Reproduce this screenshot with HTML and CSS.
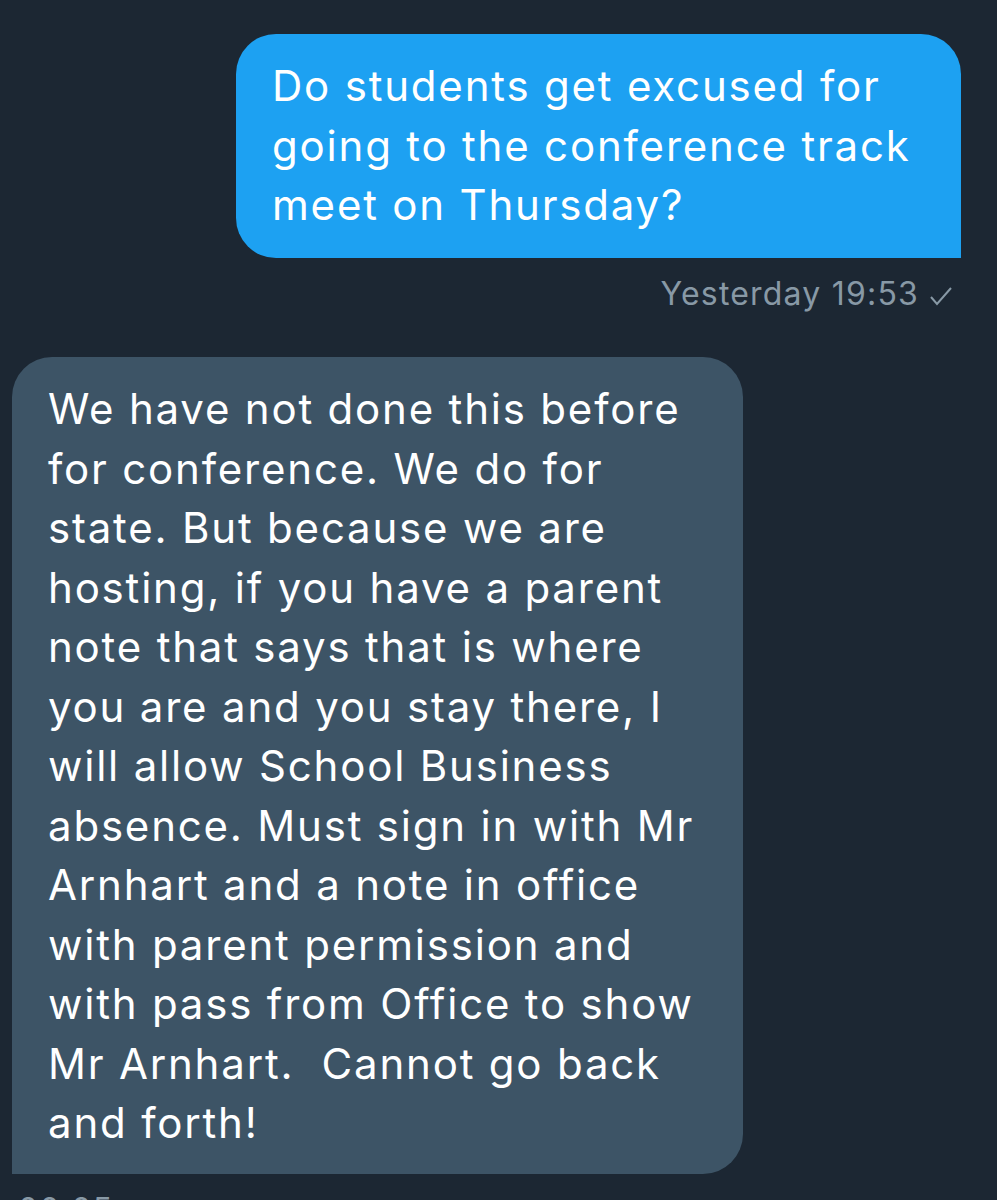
FILE: index.html
```html
<!DOCTYPE html>
<html lang="en">
  <head>
    <meta charset="UTF-8">
    <meta name="viewport" content="width=device-width, initial-scale=1.0">
    <title>Messages</title>
    <link rel="stylesheet" href="styles.css">
  </head>
  <body>
    <div id="thread">
      <div class="message outgoing">
        <div class="bubble">Do students get excused for
going to the conference track
meet on Thursday?</div>
        <div class="meta">Yesterday 19:53
          <svg class="check" width="24" height="20" viewBox="0 0 24 20"><path d="M2 11 L8 18 L22 2" fill="none" stroke="#8899a6" stroke-width="2"/></svg>
        </div>
      </div>

      <div class="message incoming">
        <div class="bubble">We have not done this before
for conference. We do for
state. But because we are
hosting, if you have a parent
note that says that is where
you are and you stay there, I
will allow School Business
absence. Must sign in with Mr
Arnhart and a note in office
with parent permission and
with pass from Office to show
Mr Arnhart.&nbsp; Cannot go back
and forth!</div>
        <div class="meta">00:05</div>
      </div>
    </div>
  </body>
</html>
```

FILE: styles.css
```css
body {
  font-family: Inter, "Noto Sans", sans-serif;
  background-color: #1c2733;
  margin: 0;
  height: 1200px;
  overflow: hidden;
}

#thread {
  display: flex;
  flex-direction: column;
  padding-top: 34px;
}

.message {
  display: flex;
  flex-direction: column;
}

.bubble {
  white-space: pre-line;
  font-size: 42px;
  line-height: 59.5px;
  letter-spacing: 1.8px;
  color: #fff;
  box-sizing: border-box;
}

.outgoing {
  align-items: flex-end;
  padding-right: 36px;
}

.outgoing .bubble {
  width: 725px;
  height: 224px;
  padding: 22px 36px;
  background-color: #1da1f2;
  border-radius: 40px 40px 0 40px;
}

.incoming {
  align-items: flex-start;
  padding-left: 12px;
  margin-top: 44px;
}

.incoming .bubble {
  width: 731px;
  height: 817px;
  padding: 22px 36px;
  background-color: #3d5466;
  border-radius: 40px 40px 40px 0;
}

.meta {
  display: flex;
  align-items: center;
  gap: 10px;
  font-size: 32px;
  letter-spacing: 1.2px;
  color: #8899a6;
  margin-top: 16px;
}

.outgoing .meta {
  margin-right: 8px;
}

.incoming .meta {
  margin-left: 6px;
}

.check {
  margin-top: 4px;
}
```
